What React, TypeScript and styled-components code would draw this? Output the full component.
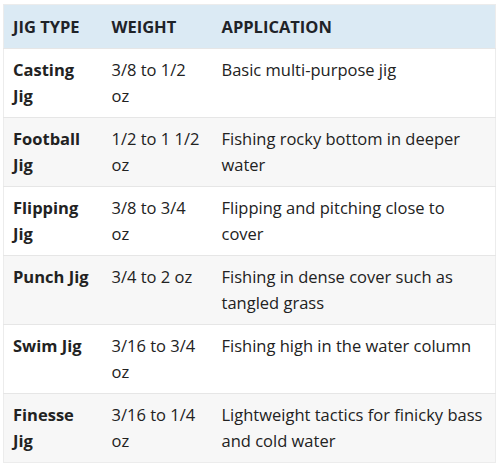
import React from "react";
import styled, { createGlobalStyle } from "styled-components";

const Global = createGlobalStyle`
  html, body { margin: 0; padding: 0; background: #ffffff; }
  body { font-family: "Open Sans", "Noto Sans", sans-serif; color: #222; }
`;

const Page = styled.div`
  padding: 4px 5px 0 3px;
`;

const Table = styled.table`
  width: 492px;
  table-layout: fixed;
  border-collapse: collapse;
  font-size: 16.5px;
  line-height: 26px;
  border: 1px solid #ececec;
`;

const HeadCell = styled.th<{ $w: number }>`
  width: ${(p) => p.$w}px;
  background: #dbeaf4;
  text-align: left;
  font-weight: 700;
  padding: 9px 9px 8px 9px;
  color: #1f2328;
  box-sizing: border-box;
`;

const Row = styled.tr<{ $alt: boolean }>`
  background: ${(p) => (p.$alt ? "#f7f7f7" : "#ffffff")};
  border-top: 1px solid #e6e6e6;
`;

const Cell = styled.td<{ $bold?: boolean }>`
  vertical-align: top;
  padding: 8px 9px 8px 9px;
  font-weight: ${(p) => (p.$bold ? 700 : 400)};
  color: #222;
`;

const rows = [
  ["Casting Jig", "3/8 to 1/2 oz", "Basic multi-purpose jig"],
  ["Football Jig", "1/2 to 1 1/2 oz", "Fishing rocky bottom in deeper water"],
  ["Flipping Jig", "3/8 to 3/4 oz", "Flipping and pitching close to cover"],
  ["Punch Jig", "3/4 to 2 oz", "Fishing in dense cover such as tangled grass"],
  ["Swim Jig", "3/16 to 3/4 oz", "Fishing high in the water column"],
  ["Finesse Jig", "3/16 to 1/4 oz", "Lightweight tactics for finicky bass and cold water"],
];

export default function App() {
  return (
    <Page>
      <Global />
      <Table>
        <thead>
          <tr>
            <HeadCell $w={99}>JIG TYPE</HeadCell>
            <HeadCell $w={110}>WEIGHT</HeadCell>
            <HeadCell $w={283}>APPLICATION</HeadCell>
          </tr>
        </thead>
        <tbody>
          {rows.map((r, i) => (
            <Row key={r[0]} $alt={i % 2 === 1}>
              <Cell $bold>{r[0]}</Cell>
              <Cell>{r[1]}</Cell>
              <Cell>{r[2]}</Cell>
            </Row>
          ))}
        </tbody>
      </Table>
    </Page>
  );
}
